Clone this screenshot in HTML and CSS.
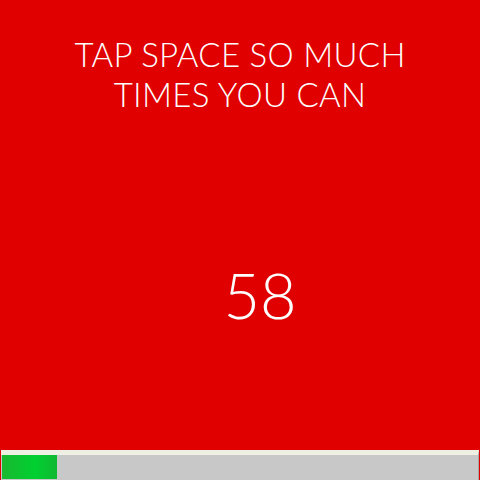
FILE: index.html
```html
<!DOCTYPE html>
<html>
<head>
<meta charset="utf-8">
<link rel="stylesheet" href="styles.css">
</head>
<body>
<div class="screen">
  <h1 class="title">TAP SPACE SO MUCH<br>TIMES YOU CAN</h1>
  <div class="count">58</div>
  <div class="bar">
    <div class="fill" style="width: 55px"></div>
  </div>
</div>
</body>
</html>
```

FILE: styles.css
```css
html, body {
  margin: 0;
  padding: 0;
}
.screen {
  width: 480px;
  height: 480px;
  background: #e00000;
  display: flex;
  flex-direction: column;
  align-items: center;
  font-family: "Lato", "Liberation Sans", sans-serif;
  font-weight: 300;
  color: #fff;
}
.title {
  margin: 34px 0 0;
  font-size: 33px;
  font-weight: 300;
  line-height: 40px;
  text-align: center;
  letter-spacing: 0.3px;
}
.count {
  margin-top: 148px;
  margin-left: 40px;
  font-size: 63px;
  line-height: 66px;
}
.bar {
  margin-top: auto;
  align-self: stretch;
  height: 24px;
  margin-left: 1px;
  margin-right: 1px;
  background: #c8c8c8;
  border-top: 5px solid #eef0e4;
  border-right: 1px solid #a8a8a8;
  display: flex;
  padding: 0 0 1px 1px;
}
.fill {
  background: linear-gradient(to right, #1ab830, #00d030 60%, #10b830);
  height: 100%;
}
```
